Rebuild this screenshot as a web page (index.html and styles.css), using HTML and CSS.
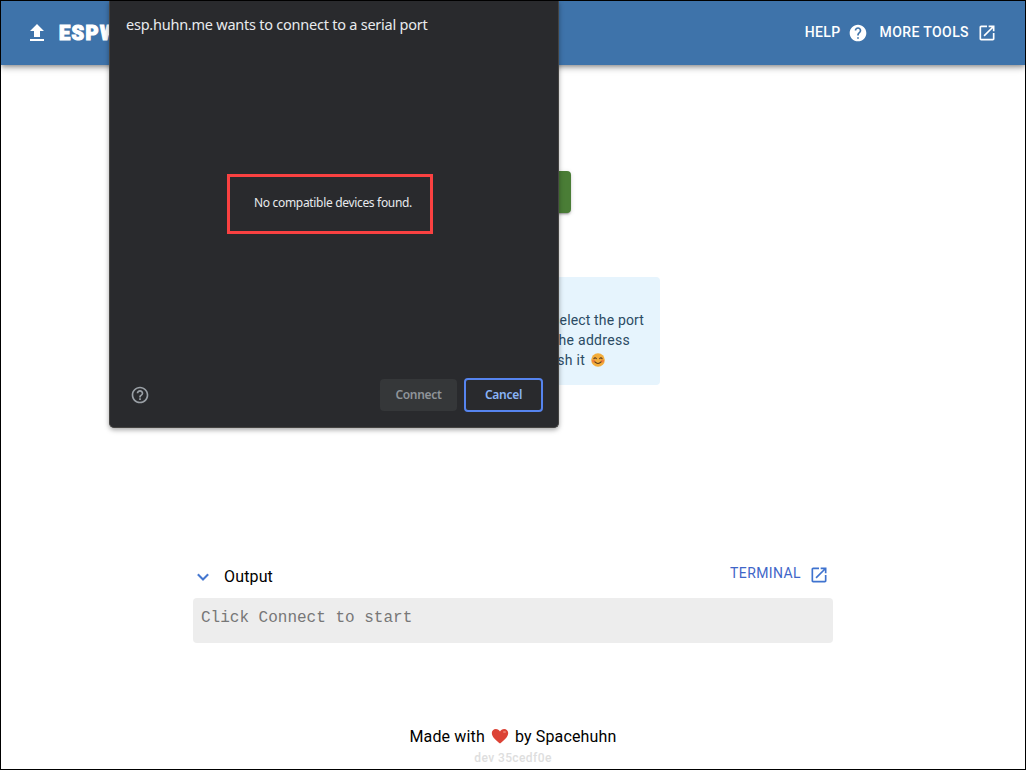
FILE: index.html
```html
<!DOCTYPE html>
<html lang="en">
<head>
<meta charset="utf-8">
<title>ESPWebTool</title>
<link rel="stylesheet" href="styles.css">
</head>
<body>
<div class="page">
  <header class="bar">
    <svg class="upload" width="24" height="24" viewBox="0 0 24 24"><path fill="#fff" d="M5 20h14v-2H5v2zm0-10h4v6h6v-6h4l-7-7-7 7z"/></svg>
    <span class="brand">ESPW</span>
    <nav class="links">
      <a class="help">HELP</a>
      <svg width="20" height="20" viewBox="0 0 24 24"><path fill="#fff" d="M12 2C6.48 2 2 6.48 2 12s4.48 10 10 10 10-4.48 10-10S17.52 2 12 2zm1 17h-2v-2h2v2zm2.07-7.75-.9.92C13.45 12.9 13 13.5 13 15h-2v-.5c0-1.1.45-2.1 1.17-2.83l1.24-1.26c.37-.36.59-.86.59-1.41 0-1.1-.9-2-2-2s-2 .9-2 2H8c0-2.21 1.79-4 4-4s4 1.79 4 4c0 .88-.36 1.68-.93 2.25z"/></svg>
      <a class="tools">MORE TOOLS</a>
      <svg width="20" height="20" viewBox="0 0 24 24"><path fill="#fff" d="M19 19H5V5h7V3H5c-1.110 0-2 .9-2 2v14c0 1.100.89 2 2 2h14c1.100 0 2-.9 2-2v-7h-2v7zM14 3v2h3.590l-9.830 9.830 1.410 1.410L19 6.410V10h2V3h-7z"/></svg>
    </nav>
  </header>
  <main class="content">
    <button class="start"></button>
    <section class="notice">
      <p class="line first">select the port</p>
      <p class="line second">the address</p>
      <p class="line third">flash it
        <svg class="smile" width="14" height="14" viewBox="0 0 14 14"><circle cx="7" cy="7" r="6.800" fill="#f3ad3b"/><circle cx="2.600" cy="8" r="1.600" fill="#f07f3c"/><circle cx="11.400" cy="8" r="1.600" fill="#f07f3c"/><path d="M2.900 5.600q1.200-1.800 2.400 0M8.700 5.600q1.200-1.800 2.400 0M3.900 8.900q3.100 3.200 6.200 0" fill="none" stroke="#54371f" stroke-width="1.100" stroke-linecap="round"/></svg>
      </p>
    </section>
    <section class="output">
      <div class="outhead">
        <svg class="chev" width="20" height="20" viewBox="0 0 24 24"><path fill="#4174cf" d="M17.300 8.200 12 13.400 6.700 8.200 5.200 9.700l6.800 6.800 6.800-6.800z" stroke="#4174cf" stroke-width=".4"/></svg>
        <span class="title">Output</span>
        <a class="terminal">TERMINAL</a>
        <svg class="open" width="20" height="20" viewBox="0 0 24 24"><path fill="#3f73cf" d="M19 19H5V5h7V3H5c-1.110 0-2 .9-2 2v14c0 1.100.89 2 2 2h14c1.100 0 2-.9 2-2v-7h-2v7zM14 3v2h3.590l-9.830 9.830 1.410 1.410L19 6.410V10h2V3h-7z"/></svg>
      </div>
      <pre class="console">Click Connect to start</pre>
    </section>
  </main>
  <footer class="foot">
    <div class="made"><span>Made with</span>
      <svg width="18" height="16" viewBox="0 0 18 16"><path fill="#dc4336" d="M9 15.500C5.500 13 .8 9.300.8 5.100.8 2.500 2.600.9 4.800.9 6.700.9 8.200 2 9 3.500 9.800 2 11.300.9 13.200.9c2.200 0 4 1.600 4 4.200 0 4.200-4.700 7.900-8.200 10.400z"/><ellipse cx="13.500" cy="4" rx="1.600" ry="1.100" fill="#ee7a68"/></svg>
      <span class="by">by Spacehuhn</span></div>
    <div class="version">dev 35cedf0e</div>
  </footer>
  <div class="dialog">
    <h1 class="ask">esp.huhn.me wants to connect to a serial port</h1>
    <div class="empty"><span class="none">No compatible devices found.</span></div>
    <div class="actions">
      <svg class="q" width="20" height="20" viewBox="0 0 24 24"><path fill="#9aa0a6" d="M11 18h2v-2h-2v2zm1-16C6.480 2 2 6.480 2 12s4.480 10 10 10 10-4.480 10-10S17.520 2 12 2zm0 18c-4.410 0-8-3.590-8-8s3.590-8 8-8 8 3.590 8 8-3.590 8-8 8zm0-14c-2.210 0-4 1.790-4 4h2c0-1.100.9-2 2-2s2 .9 2 2c0 2-3 1.750-3 5h2c0-2.250 3-2.500 3-5 0-2.210-1.790-4-4-4z"/></svg>
      <button class="btn connect">Connect</button>
      <button class="btn cancel">Cancel</button>
    </div>
  </div>
</div>
</body>
</html>
```
FILE: styles.css
```css
* { box-sizing: border-box; }
body { margin: 0; font-family: Roboto, sans-serif; background: #fff; }
svg { display: block; flex: none; }
.page { position: relative; width: 1026px; height: 770px; border: 1px solid #000; overflow: hidden; display: flex; flex-direction: column; }
.bar { height: 64px; flex: none; background: #3e73aa; display: flex; align-items: center; padding: 0 28px 0 24px; box-shadow: 0 2px 4px -1px rgba(0,0,0,.3), 0 4px 5px rgba(0,0,0,.14), 0 1px 10px rgba(0,0,0,.12); }
.brand { color: #fff; font-size: 20px; font-weight: 900; line-height: 24px; margin-left: 10px; letter-spacing: 1.4px; -webkit-text-stroke: 1.2px #fff; }
.links { margin-left: auto; display: flex; align-items: center; color: #fff; font-size: 14px; line-height: 18px; font-weight: 500; letter-spacing: .4px; }
.help { margin: -2px 7px 0 0; }
.tools { margin: -2px 8px 0 12px; }
.content { width: 640px; align-self: center; display: flex; flex-direction: column; align-items: center; }
.start { margin: 106px 0 0; width: 116px; height: 42px; border: 0; border-radius: 4px; background: #4a7d36; box-shadow: 0 3px 1px -2px rgba(0,0,0,.2), 0 2px 2px rgba(0,0,0,.14), 0 1px 5px rgba(0,0,0,.12); }
.notice { margin-top: 64px; width: 294px; height: 108px; border-radius: 4px; background: #e6f4fd; color: #2b4b64; padding: 33px 16px 0; font-size: 14px; line-height: 20px; letter-spacing: .15px; }
.line { margin: 0; display: flex; align-items: center; white-space: nowrap; justify-content: flex-end; }
.second { padding-right: 14px; letter-spacing: .3px; }
.third { padding-right: 39px; letter-spacing: .25px; }
.smile { margin-left: 6px; }
.output { margin-top: 176px; width: 640px; }
.outhead { display: flex; height: 37px; align-items: center; font-size: 16px; padding-bottom: 6px; }
.title { margin-left: 11px; letter-spacing: .15px; line-height: 24px; }
.terminal { margin: -7px 8px 0 auto; font-size: 14px; font-weight: 400; color: #3f66c8; letter-spacing: .4px; }
.open { margin: -4px 4px 0 0; }
.console { margin: 0; height: 45px; border-radius: 4px; background: #ededed; color: #777; font: 16px/24px "Liberation Mono", monospace; padding: 8px; }
.foot { margin-top: 81px; text-align: center; }
.made { display: flex; justify-content: center; align-items: center; height: 24px; font-size: 16px; letter-spacing: .15px; gap: 6px; }
.version { font-size: 12px; font-weight: 500; line-height: 20px; color: #dedede; letter-spacing: .4px; }
.dialog { position: absolute; left: 108px; top: 0; width: 450px; height: 427px; background: #292a2d; border: 1px solid #454442; border-top: 0; border-radius: 0 0 5px 5px; box-shadow: 0 2px 5px rgba(0,0,0,.35); font-family: "Noto Sans", sans-serif; color: #e8eaed; display: flex; flex-direction: column; }
.ask { margin: 12px 0 0 16px; font-size: 14.500px; line-height: 22px; font-weight: 400; letter-spacing: -.24px; white-space: nowrap; }
.empty { margin: 139px 0 0 117px; width: 206px; height: 60px; border: 3px solid #fa4141; display: flex; align-items: center; justify-content: center; font-size: 12px; letter-spacing: -.32px; padding: 0 0 4px 6px; }
.none { white-space: nowrap; }
.actions { margin-top: 144px; display: flex; align-items: center; padding: 0 15px 0 20px; }
.btn { font: 600 12px/18px "Noto Sans", sans-serif; height: 34px; border-radius: 4px; padding: 0; letter-spacing: -.3px; }
.connect { width: 77px; height: 32px; margin: 0 7px 0 auto; border: 0; background: #353739; color: #8f9499; }
.cancel { width: 79px; border: 2px solid #5684ee; background: transparent; color: #8ab4f8; }
```
